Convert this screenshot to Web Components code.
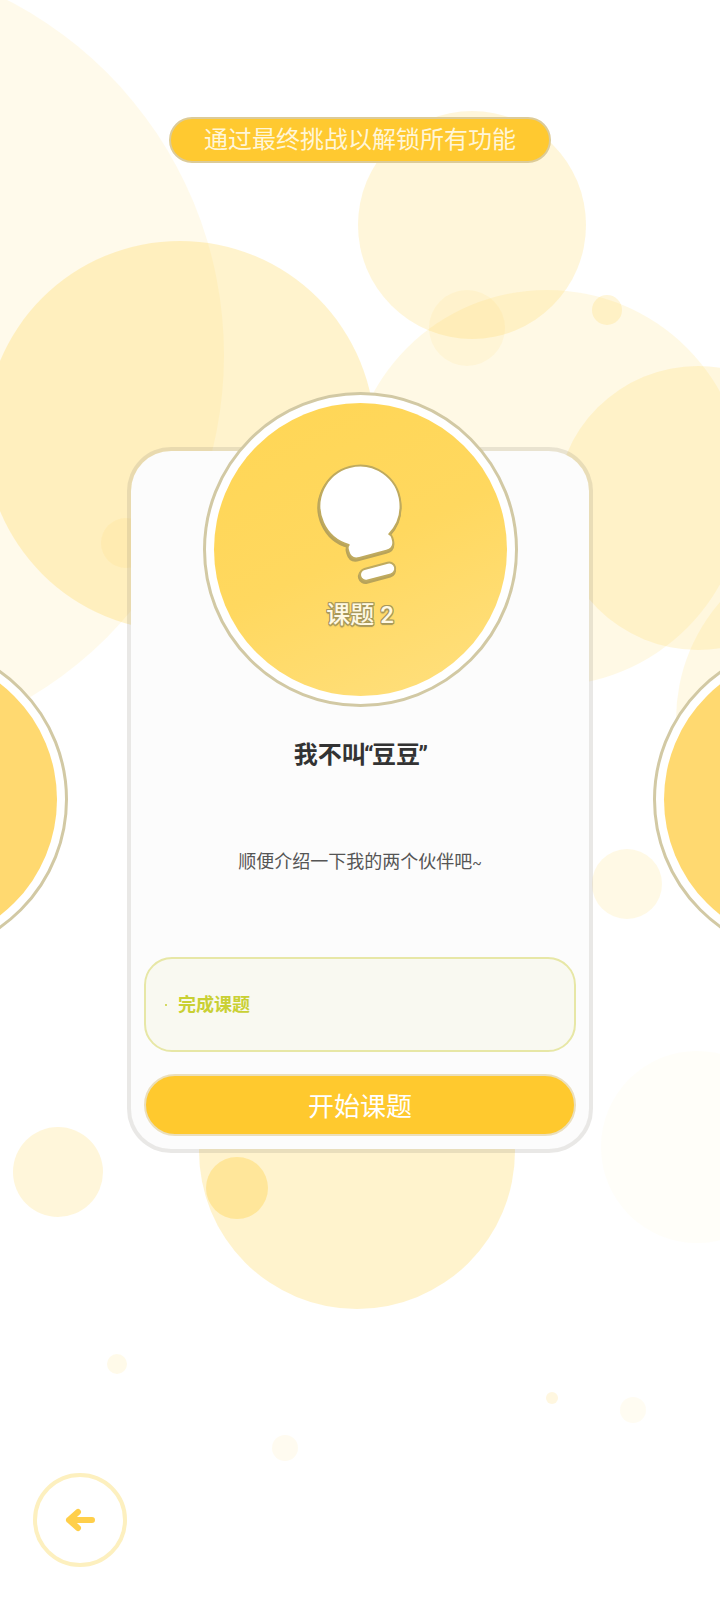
<!DOCTYPE html>
<html lang="zh"><head><meta charset="utf-8"><title>课题</title>
<style>
html,body{margin:0;padding:0;background:#fff}
body{font-family:Roboto,"Noto Sans CJK SC",sans-serif}
</style></head><body>
<quest-screen>
  <bubble-dot style="--x:-175px;--y:355px;--r:399px;--a:.11"></bubble-dot>
  <bubble-dot style="--x:180px;--y:436px;--r:195px;--a:.27"></bubble-dot>
  <bubble-dot style="--x:472px;--y:225px;--r:114px;--a:.2"></bubble-dot>
  <bubble-dot style="--x:467px;--y:328px;--r:38px;--a:.09"></bubble-dot>
  <bubble-dot style="--x:607px;--y:310px;--r:15px;--a:.2"></bubble-dot>
  <bubble-dot style="--x:547px;--y:488px;--r:198px;--a:.14"></bubble-dot>
  <bubble-dot style="--x:698px;--y:508px;--r:142px;--a:.18"></bubble-dot>
  <bubble-dot style="--x:856px;--y:720px;--r:180px;--a:.14"></bubble-dot>
  <bubble-dot style="--x:126px;--y:543px;--r:25px;--a:.1"></bubble-dot>
  <bubble-dot style="--x:627px;--y:884px;--r:35px;--a:.14"></bubble-dot>
  <bubble-dot style="--x:357px;--y:1151px;--r:158px;--a:.27"></bubble-dot>
  <bubble-dot style="--x:237px;--y:1188px;--r:31px;--a:.38"></bubble-dot>
  <bubble-dot style="--x:58px;--y:1172px;--r:45px;--a:.2"></bubble-dot>
  <bubble-dot style="--x:697px;--y:1147px;--r:96px;--a:.03"></bubble-dot>
  <bubble-dot style="--x:117px;--y:1364px;--r:10px;--a:.12"></bubble-dot>
  <bubble-dot style="--x:285px;--y:1448px;--r:13px;--a:.08"></bubble-dot>
  <bubble-dot style="--x:552px;--y:1398px;--r:6px;--a:.17"></bubble-dot>
  <bubble-dot style="--x:633px;--y:1410px;--r:13px;--a:.07"></bubble-dot>

  <side-disc style="--x:-90px"></side-disc>
  <side-disc style="--x:810px"></side-disc>

  <unlock-banner>通过最终挑战以解锁所有功能</unlock-banner>
  <lesson-card label="课题 2" status="完成课题" action="开始课题">
    <span slot="heading">我不叫<q-mark>“</q-mark>豆豆<q-mark>”</q-mark></span>
    顺便介绍一下我的两个伙伴吧<small-tilde>~</small-tilde>
  </lesson-card>
  <back-button></back-button>
</quest-screen>

<script>
function def(name, html){
  customElements.define(name, class extends HTMLElement{
    constructor(){super();const t=document.createElement('template');t.innerHTML=html;this.attachShadow({mode:'open'}).appendChild(t.content.cloneNode(true));}
    connectedCallback(){
      this.shadowRoot.querySelectorAll('[data-attr]').forEach(n=>{n.textContent=this.getAttribute(n.dataset.attr)||''});
    }
  });
}
def('q-mark',`<style>:host{display:inline;margin:0 -1.75px}</style><slot></slot>`);
def('small-tilde',`<style>:host{display:inline;font-size:14px}</style><slot></slot>`);
def('quest-screen',`<style>
:host{display:flex;flex-direction:column;align-items:center;position:relative;width:720px;height:1600px;overflow:hidden;padding-top:117px;box-sizing:border-box;background:#fff}
</style><slot></slot>`);
def('bubble-dot',`<style>
:host{position:absolute;left:calc(var(--x) - var(--r));top:calc(var(--y) - var(--r));width:calc(var(--r) * 2);height:calc(var(--r) * 2);border-radius:50%;background:rgba(255,210,70,var(--a))}
</style>`);
def('side-disc',`<style>
:host{position:absolute;left:calc(var(--x) - 157.5px);top:642px;width:315px;height:315px;box-sizing:border-box;border-radius:50%;border:3px solid #d2c9a4;background:#fff;padding:8px}
div{width:100%;height:100%;border-radius:50%;background:#ffd970}
</style><div></div>`);
def('unlock-banner',`<style>
:host{display:flex;align-items:center;justify-content:center;position:relative;width:382px;height:46px;box-sizing:border-box;border:2px solid #dccb98;border-radius:23px;background:#ffc930;color:#fff6d8;font-size:24px;line-height:1;flex:none}
</style><slot></slot>`);
def('lesson-card',`<style>
:host{display:flex;flex-direction:column;align-items:stretch;position:relative;width:466px;height:706px;box-sizing:border-box;margin-top:284px;padding:0 13px 13px;border:4px solid rgba(120,115,100,.16);border-radius:44px;background:#fcfcfc;background-clip:padding-box;flex:none}
.disc{align-self:center;width:315px;height:315px;margin-top:-59px;box-sizing:border-box;border-radius:50%;border:3px solid #d2c9a4;background:#fff;padding:8px;flex:none}
.face{width:100%;height:100%;border-radius:50%;background:linear-gradient(155deg,#ffd655 0%,#ffd85f 50%,#ffe080 100%);display:flex;flex-direction:column;align-items:center;box-sizing:border-box;padding-top:53px}
svg{display:block;margin-left:-3px}
.label{margin-top:13px;color:#fff9e4;font-size:24px;line-height:32px;font-weight:500;text-shadow:-1px -1px 0 #a8985a,1px -1px 0 #a8985a,-1px 1px 0 #a8985a,1px 1px 0 #a8985a,0 -1px 0 #a8985a,0 2px 1px #a8985a,-1px 0 0 #a8985a,1px 0 0 #a8985a}
h2{margin:32px 0 0;text-align:center;font-size:24px;line-height:32px;font-weight:700;color:#333}
p{margin:78px 0 0;text-align:center;font-size:18px;line-height:26px;color:#555}
.status{margin-top:81px;height:95px;box-sizing:border-box;border:2px solid #e7e7a6;border-radius:28px;background:#f9f9f1;display:flex;align-items:center;padding:0 0 3px 19px;color:#c9d034;font-size:18px;font-weight:700;flex:none}
.status i{width:2px;height:2px;border-radius:50%;background:#c9d034;margin:3px 11px 0 0}
.go{margin-top:22px;height:62px;box-sizing:border-box;border:2px solid #ebdfbc;border-radius:31px;background:#ffc92e;color:#fff;font-size:26px;display:flex;align-items:center;justify-content:center;padding-bottom:2px;flex:none}
</style>
<div class="disc"><div class="face">
<svg width="110" height="130" viewBox="0 0 110 130" aria-hidden="true">
  <g transform="translate(56 50) rotate(-15)">
    <g fill="#b8a35a" stroke="#b8a35a" stroke-width="3" stroke-linejoin="round" transform="translate(-1 1.5)">
      <path d="M-21 34.7A40.5 40.5 0 1 1 21 34.7Q23 36 23 39L23 41Q23 50 14 50L-14 50Q-23 50 -23 41L-23 39Q-23 36 -21 34.7Z"/>
      <rect x="-18" y="62" width="36" height="12" rx="6"/>
    </g>
    <g fill="#fff" stroke="#bfaa5e" stroke-width="2" stroke-linejoin="round">
      <path d="M-21 34.7A40.5 40.5 0 1 1 21 34.7Q23 36 23 39L23 41Q23 50 14 50L-14 50Q-23 50 -23 41L-23 39Q-23 36 -21 34.7Z"/>
      <rect x="-18" y="62" width="36" height="12" rx="6"/>
    </g>
  </g>
</svg>
<div class="label" data-attr="label"></div>
</div></div>
<h2><slot name="heading"></slot></h2>
<p><slot></slot></p>
<div class="status"><i></i><span data-attr="status"></span></div>
<div class="go" data-attr="action"></div>`);
def('back-button',`<style>
:host{display:flex;align-items:center;justify-content:center;align-self:flex-start;width:94px;height:94px;box-sizing:border-box;margin:320px 0 0 33px;border:4px solid #fdf0bf;border-radius:50%;flex:none}
</style>
<svg width="32" height="28" viewBox="0 0 32 28" aria-hidden="true"><path d="M5 14H28M14 6L5 14L14 22" fill="none" stroke="#ffcf4a" stroke-width="6" stroke-linecap="round" stroke-linejoin="round"/></svg>`);
</script>
</body></html>
